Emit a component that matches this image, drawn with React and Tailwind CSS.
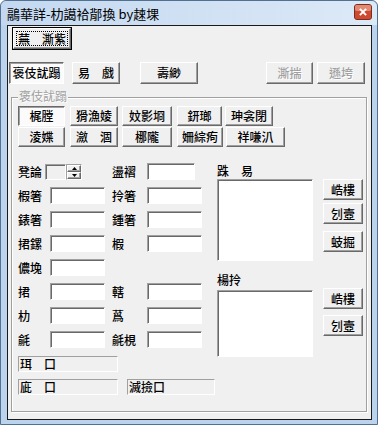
import React from "react";

const raised =
  "border border-t-white border-l-white border-r-[#696969] border-b-[#696969] shadow-[inset_-1px_-1px_0_#a0a0a0] bg-[#f0f0f0]";
const pressed =
  "border border-t-[#696969] border-l-[#696969] border-r-white border-b-white shadow-[inset_1px_1px_0_#a0a0a0] bg-[#fbfbfb]";
const sunken =
  "bg-white border border-t-[#a0a0a0] border-l-[#a0a0a0] border-r-white border-b-white shadow-[inset_1px_1px_0_#696969]";
const staticBox =
  "bg-[#f0f0f0] border border-t-[#a0a0a0] border-l-[#a0a0a0] border-r-white border-b-white";

function Btn({ children, className = "", down, disabled }) {
  return (
    <div
      className={`flex items-center justify-center text-[12px] font-medium leading-none shrink-0 ${
        down ? pressed : raised
      } ${disabled ? "text-[#a0a0a0] [text-shadow:1px_1px_0_#fff]" : "text-black"} ${className}`}
    >
      {children}
    </div>
  );
}

function Edit({ className = "" }) {
  return <div className={`h-[17px] shrink-0 ${sunken} ${className}`} />;
}

function Field({ label, labelW, editW }) {
  return (
    <div className="flex items-center">
      <span className={`${labelW} shrink-0 text-[12px] font-medium leading-none`}>{label}</span>
      {editW && <Edit className={editW} />}
    </div>
  );
}

function CloseButton() {
  return (
    <div className="w-[18px] h-[16px] mb-[2px] rounded-[3px] border border-[#7a2e1e] bg-red-600 flex items-center justify-center">
      <svg width="18" height="16" viewBox="0 0 18 16">
        <rect x="0" y="0" width="18" height="16" rx="2" fill="#cc4b30" />
        <rect x="0" y="0" width="18" height="7" rx="2" fill="#e48a72" />
        <path d="M5.5 4.5 L12.5 11.5 M12.5 4.5 L5.5 11.5" stroke="#fff" strokeWidth="2.2" />
      </svg>
    </div>
  );
}

export default function App() {
  const rows = [
    ["椵箸", "拎箸"],
    ["錶箸", "鍾箸"],
    ["捃鏍", "椵"],
    ["儂堍", null],
    ["捃", "轄"],
    ["朸", "蔿"],
    ["毹", "毹梘"],
  ];

  return (
    <div
      className="w-[378px] h-[425px] flex flex-col border border-[#52708f] rounded-t-[6px] bg-[#bcd3ee] text-black"
      style={{ fontFamily: '"Noto Sans CJK TC", "Noto Sans CJK SC", sans-serif' }}
    >
      {/* title bar */}
      <div className="h-[24px] flex items-center justify-between pl-[6px] pr-[5px] bg-linear-to-r from-[#c3d8f0] to-[#dce9f7] rounded-t-[6px]">
        <span className="text-[13px] leading-none text-black">鷊華詳-朸譪袷鄁換 by趚堁</span>
        <CloseButton />
      </div>

      {/* client area */}
      <div className="ml-[6px] w-[365px] h-[395px] border border-[#1a1a1a] bg-[#f0f0f0] flex flex-col">
        {/* default button */}
        <div className="mt-[1px] ml-[4px] w-[60px] h-[23px] border border-black flex">
          <div className={`flex-1 ${raised} p-[2px] flex`}>
            <div className="flex-1 border border-dotted border-black flex items-center justify-center text-[12px] font-medium leading-none">
              蕪　澌紫
            </div>
          </div>
        </div>

        {/* tab buttons */}
        <div className="mt-[12px] flex items-center h-[22px]">
          <Btn down className="ml-[1px] w-[55px] h-[22px]">褒伎訧蹋</Btn>
          <Btn className="ml-[8px] w-[48px] h-[22px]">易　戲</Btn>
          <Btn className="ml-[20px] w-[58px] h-[22px]">壽緲</Btn>
          <Btn disabled className="ml-auto w-[47px] h-[22px]">澌揣</Btn>
          <Btn disabled className="ml-[4px] mr-[6px] w-[48px] h-[22px]">遜垮</Btn>
        </div>

        {/* group box */}
        <div className="relative mt-[13px] ml-[3px] w-[356px] h-[315px] border border-[#a0a0a0] shadow-[inset_1px_1px_0_#fff,1px_1px_0_#fff] flex flex-col pl-[6px]">
          <span className="absolute left-[6px] -top-[8px] px-[1px] bg-[#f0f0f0] text-[12px] leading-none text-[#a0a0a0] [text-shadow:1px_1px_0_#fff]">
            褒伎訧蹋
          </span>

          <div className="mt-[8px] flex h-[20px]">
            <Btn down className="w-[47px] h-[20px]">梶膛</Btn>
            <Btn className="ml-[5px] w-[48px] h-[20px]">猾漁婈</Btn>
            <Btn className="ml-[4px] w-[50px] h-[20px]">妏影埛</Btn>
            <Btn className="ml-[5px] w-[45px] h-[20px]">鈃瑯</Btn>
            <Btn className="ml-[3px] w-[48px] h-[20px]">珅衾閉</Btn>
          </div>
          <div className="mt-[1px] flex h-[20px]">
            <Btn className="w-[47px] h-[20px]">淩媟</Btn>
            <Btn className="ml-[5px] w-[48px] h-[20px]">瀲　涸</Btn>
            <Btn className="ml-[4px] w-[50px] h-[20px]">梛隴</Btn>
            <Btn className="ml-[5px] w-[46px] h-[20px]">姍綜痀</Btn>
            <Btn className="ml-[3px] w-[59px] h-[20px]">祥嗛汃</Btn>
          </div>

          <div className="mt-[16px] flex">
            {/* left form */}
            <div className="w-[184px] shrink-0 flex flex-col">
              <div className="flex flex-col gap-[7px]">
                <div className="flex items-center h-[17px]">
                  <div className="w-[94px] shrink-0 flex items-center">
                    <span className="w-[27px] shrink-0 text-[12px] font-medium leading-none">凳論</span>
                    <div className={`w-[21px] h-[16px] shrink-0 ${staticBox} shadow-[inset_1px_1px_0_#696969]`} />
                    <div className={`w-[16px] h-[16px] shrink-0 flex flex-col ${staticBox}`}>
                      <div className={`flex-1 ${raised} flex items-center justify-center`}>
                        <svg width="5" height="3" viewBox="0 0 5 3"><path d="M2.5 0 L5 3 L0 3 Z" fill="#000" /></svg>
                      </div>
                      <div className={`flex-1 ${raised} flex items-center justify-center`}>
                        <svg width="5" height="3" viewBox="0 0 5 3"><path d="M0 0 L5 0 L2.5 3 Z" fill="#000" /></svg>
                      </div>
                    </div>
                  </div>
                  <Field label="盪褶" labelW="w-[35px]" editW="w-[48px]" />
                </div>
                {rows.map(([a, b], i) => (
                  <div key={i} className="flex items-center h-[17px]">
                    <div className="w-[94px] shrink-0">
                      <Field label={a} labelW="w-[32px]" editW="w-[55px]" />
                    </div>
                    {b && <Field label={b} labelW="w-[35px]" editW="w-[55px]" />}
                  </div>
                ))}
              </div>

              <div className={`mt-[8px] w-[100px] h-[16px] shrink-0 ${staticBox} flex items-center pl-[1px] text-[12px] font-medium leading-none`}>
                珥　口
              </div>
              <div className="mt-[7px] flex">
                <div className={`w-[100px] h-[16px] shrink-0 ${staticBox} flex items-center pl-[1px] text-[12px] font-medium leading-none`}>
                  庛　口
                </div>
                <div className={`ml-[9px] w-[88px] h-[16px] shrink-0 ${staticBox} flex items-center pl-[1px] text-[12px] font-medium leading-none`}>
                  滅撿口
                </div>
              </div>
            </div>

            {/* right panel */}
            <div className="ml-[15px] flex flex-col">
              <div className="h-[16px] flex items-center text-[12px] font-medium leading-none">跦　易</div>
              <div className="flex">
                <div className={`w-[96px] h-[82px] shrink-0 ${sunken}`} />
                <div className="ml-[10px] flex flex-col">
                  <Btn className="w-[40px] h-[21px]">峼樓</Btn>
                  <Btn className="mt-[3px] w-[40px] h-[21px]">刉壼</Btn>
                  <Btn className="mt-[7px] w-[40px] h-[21px]">蚑掘</Btn>
                </div>
              </div>
              <div className="mt-[11px] h-[16px] flex items-center text-[12px] font-medium leading-none">楊拎</div>
              <div className="flex mt-[2px]">
                <div className={`w-[96px] h-[67px] shrink-0 ${sunken}`} />
                <div className="ml-[10px] -mt-[2px] flex flex-col">
                  <Btn className="w-[40px] h-[21px]">峼樓</Btn>
                  <Btn className="mt-[6px] w-[40px] h-[21px]">刉壼</Btn>
                </div>
              </div>
            </div>
          </div>
        </div>
      </div>
    </div>
  );
}
